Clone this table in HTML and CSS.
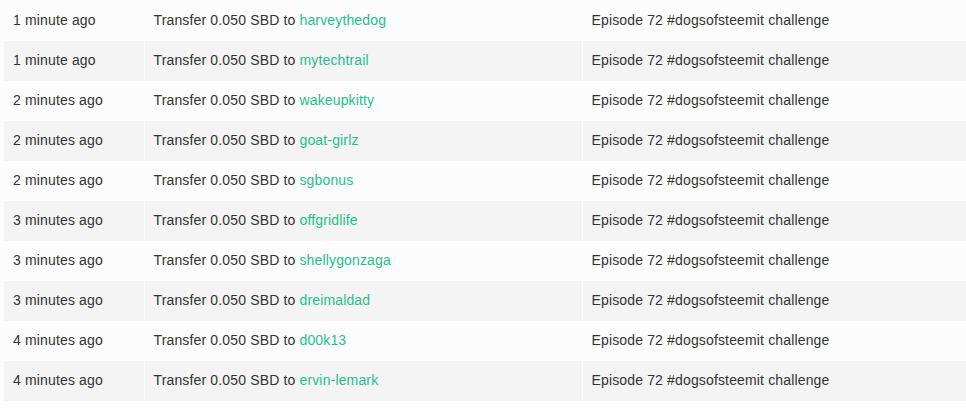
FILE: index.html
```html
<!DOCTYPE html>
<html lang="en">
<head>
  <meta charset="UTF-8" />
  <title>Transfers</title>
  <link rel="stylesheet" href="styles.css">
</head>
<body>
  <table class="transfers">
    <tbody>
      <tr><td class="when">1 minute ago</td><td class="what">Transfer 0.050 SBD to <a href="#">harveythedog</a></td><td class="memo">Episode 72 #dogsofsteemit challenge</td></tr>
      <tr><td class="when">1 minute ago</td><td class="what">Transfer 0.050 SBD to <a href="#">mytechtrail</a></td><td class="memo">Episode 72 #dogsofsteemit challenge</td></tr>
      <tr><td class="when">2 minutes ago</td><td class="what">Transfer 0.050 SBD to <a href="#">wakeupkitty</a></td><td class="memo">Episode 72 #dogsofsteemit challenge</td></tr>
      <tr><td class="when">2 minutes ago</td><td class="what">Transfer 0.050 SBD to <a href="#">goat-girlz</a></td><td class="memo">Episode 72 #dogsofsteemit challenge</td></tr>
      <tr><td class="when">2 minutes ago</td><td class="what">Transfer 0.050 SBD to <a href="#">sgbonus</a></td><td class="memo">Episode 72 #dogsofsteemit challenge</td></tr>
      <tr><td class="when">3 minutes ago</td><td class="what">Transfer 0.050 SBD to <a href="#">offgridlife</a></td><td class="memo">Episode 72 #dogsofsteemit challenge</td></tr>
      <tr><td class="when">3 minutes ago</td><td class="what">Transfer 0.050 SBD to <a href="#">shellygonzaga</a></td><td class="memo">Episode 72 #dogsofsteemit challenge</td></tr>
      <tr><td class="when">3 minutes ago</td><td class="what">Transfer 0.050 SBD to <a href="#">dreimaldad</a></td><td class="memo">Episode 72 #dogsofsteemit challenge</td></tr>
      <tr><td class="when">4 minutes ago</td><td class="what">Transfer 0.050 SBD to <a href="#">d00k13</a></td><td class="memo">Episode 72 #dogsofsteemit challenge</td></tr>
      <tr><td class="when">4 minutes ago</td><td class="what">Transfer 0.050 SBD to <a href="#">ervin-lemark</a></td><td class="memo">Episode 72 #dogsofsteemit challenge</td></tr>
    </tbody>
  </table>
</body>
</html>
```

FILE: styles.css
```css
body {
  margin: 0;
  padding: 1px 0 0 4px;
  background: #fcfcfc;
  font-family: "Liberation Sans", Arial, sans-serif;
  font-size: 14px;
  letter-spacing: 0.15px;
  color: #333;
  overflow: hidden;
}

.transfers {
  border-collapse: collapse;
  width: 966px;
  table-layout: fixed;
}

.transfers td {
  height: 40px;
  padding: 0 9px 2px 9px;
  box-sizing: border-box;
  white-space: nowrap;
  border-left: 1px solid #fcfcfc;
}

.transfers td:first-child {
  border-left: none;
}

.transfers tr:nth-child(even) td {
  background: #f4f4f4;
}

.when {
  width: 140px;
}

.what {
  width: 438px;
}

.transfers a {
  color: #1fbf8f;
  text-decoration: none;
}
```
